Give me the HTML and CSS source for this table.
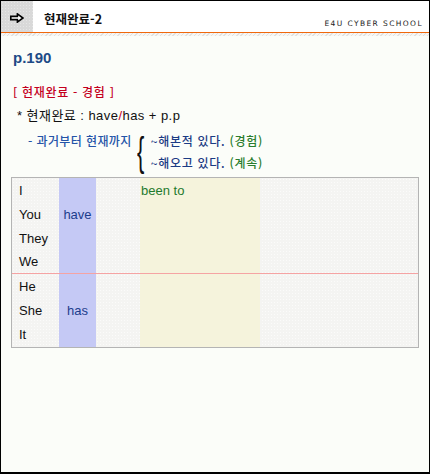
FILE: index.html
```html
<!DOCTYPE html>
<html lang="ko">
<head>
<meta charset="utf-8">
<link rel="stylesheet" href="styles.css">
</head>
<body>
<div class="frame">
  <header class="top">
    <div class="icon-box">
      <svg width="14" height="10" viewBox="0 0 14 10"><path d="M0.8 3.4 H7.4 V0.9 L12.9 5 L7.4 9.1 V6.6 H0.8 Z" fill="#fff" stroke="#000" stroke-width="1.6" stroke-linejoin="miter"/></svg>
    </div>
    <div class="title">현재완료-2</div>
    <div class="brand">E4U CYBER SCHOOL</div>
  </header>
  <div class="rule"></div>
  <div class="stripe"></div>
  <main class="content">
    <div class="page">p.190</div>
    <div class="section">[ 현재완료 - 경험 ]</div>
    <div class="formula">* 현재완료 : have<span class="red">/</span>has + p.p</div>
    <div class="meaning">
      <div class="since">- 과거부터 현재까지</div>
      <div class="brace">{</div>
      <div class="uses">
        <div>~해본적 있다. <span class="green">(경험)</span></div>
        <div>~해오고 있다. <span class="green">(계속)</span></div>
      </div>
    </div>
    <div class="grid">
      <div class="col-blue"></div>
      <div class="col-yellow"></div>
      <div class="divider"></div>
      <div class="pr r1">I</div>
      <div class="pr r2">You</div>
      <div class="pr r3">They</div>
      <div class="pr r4">We</div>
      <div class="pr r6">He</div>
      <div class="pr r7">She</div>
      <div class="pr r8">It</div>
      <div class="aux r2">have</div>
      <div class="aux r7">has</div>
      <div class="pp r1">been to</div>
    </div>
  </main>
</div>
</body>
</html>
```
FILE: styles.css
```css
html, body {
  margin: 0;
  padding: 0;
  background: #fbfdf9;
}
.frame {
  width: 430px;
  height: 474px;
  box-sizing: border-box;
  border: 1px solid #000;
  border-bottom-width: 2px;
  background: #fbfdf9;
  font-family: "Liberation Sans", "Noto Sans CJK KR", sans-serif;
  display: flex;
  flex-direction: column;
}
.top {
  height: 31px;
  display: flex;
  align-items: stretch;
  background: #fff;
}
.icon-box {
  width: 32px;
  background-color: #d9d9d9;
  background-image: radial-gradient(#e6e6e6 0.6px, transparent 0.8px);
  background-size: 3px 3px;
  display: flex;
  align-items: center;
  justify-content: center;
  padding-top: 2px;
  box-sizing: border-box;
}
.title {
  margin-left: 11px;
  padding-top: 10px;
  font-family: "Noto Sans CJK KR", sans-serif;
  font-weight: 700;
  font-size: 12.5px;
  line-height: 15px;
  color: #111;
}
.brand {
  margin-left: auto;
  margin-right: 6px;
  padding-top: 18px;
  font-family: "DejaVu Sans", sans-serif;
  font-size: 7.5px;
  line-height: 9px;
  letter-spacing: 1.4px;
  color: #222;
}
.rule {
  height: 1px;
  background: #f0680c;
}
.stripe {
  height: 3px;
  background: repeating-linear-gradient(135deg, #e2e2e0 0 1px, #f6f6f4 1px 3px);
}
.content {
  padding-left: 12px;
}
.page {
  margin-top: 12px;
  font-size: 15px;
  line-height: 20px;
  font-weight: 700;
  color: #1d4a86;
}
.section {
  margin-top: 14px;
  font-family: "Noto Sans CJK KR", sans-serif;
  font-weight: 500;
  font-size: 12px;
  line-height: 20px;
  letter-spacing: 0.7px;
  color: #c4001e;
}
.formula {
  margin-top: 4px;
  margin-left: 4px;
  font-family: "Liberation Sans", "Noto Sans CJK KR", sans-serif;
  font-size: 13px;
  line-height: 20px;
  letter-spacing: 0.45px;
  color: #111;
}
.red { color: #c4001e; }
.green { color: #2a7d2e; }
.meaning {
  margin-top: 4px;
  display: flex;
  align-items: flex-start;
}
.since {
  margin-left: 15px;
  font-family: "Noto Sans CJK KR", sans-serif;
  font-weight: 500;
  font-size: 12px;
  line-height: 22px;
  letter-spacing: 0.4px;
  color: #2454a8;
}
.brace {
  margin-left: 5px;
  margin-top: 4px;
  font-family: "Liberation Sans", sans-serif;
  font-size: 40px;
  line-height: 36px;
  width: 8px;
  color: #111;
  transform: scaleX(0.55);
  transform-origin: left center;
}
.uses {
  margin-left: 6px;
  font-family: "Noto Sans CJK KR", sans-serif;
  font-weight: 500;
  font-size: 12px;
  line-height: 22px;
  letter-spacing: 0.7px;
  color: #1b3b84;
}
.grid {
  margin-top: 3px;
  margin-left: -2px;
  width: 408px;
  box-sizing: border-box;
  border: 1px solid #b4b4b4;
  background-color: #f4f4f2;
  background-image: radial-gradient(#fbfbfa 0.5px, transparent 0.8px);
  background-size: 3px 3px;
  display: grid;
  grid-template-columns: 47px 37px 44px 120px 1fr;
  grid-template-rows: 24px 24px 24px 23px 1px 24px 24px 25px;
  font-size: 13px;
  color: #111;
}
.col-blue {
  grid-column: 2;
  grid-row: 1 / -1;
  background: #c5c9f5;
}
.col-yellow {
  grid-column: 4;
  grid-row: 1 / -1;
  background: #f5f3dc;
}
.divider {
  grid-column: 1 / -1;
  grid-row: 5;
  background: #f5a3a3;
  z-index: 1;
}
.pr {
  grid-column: 1;
  padding-left: 7px;
  display: flex;
  align-items: center;
}
.aux {
  grid-column: 2;
  display: flex;
  align-items: center;
  justify-content: center;
  color: #1c3d8c;
}
.pp {
  grid-column: 4;
  padding-left: 1px;
  display: flex;
  align-items: center;
  color: #1f7a2d;
}
.r1 { grid-row: 1; }
.r2 { grid-row: 2; }
.r3 { grid-row: 3; }
.r4 { grid-row: 4; }
.r6 { grid-row: 6; }
.r7 { grid-row: 7; }
.r8 { grid-row: 8; }
```
